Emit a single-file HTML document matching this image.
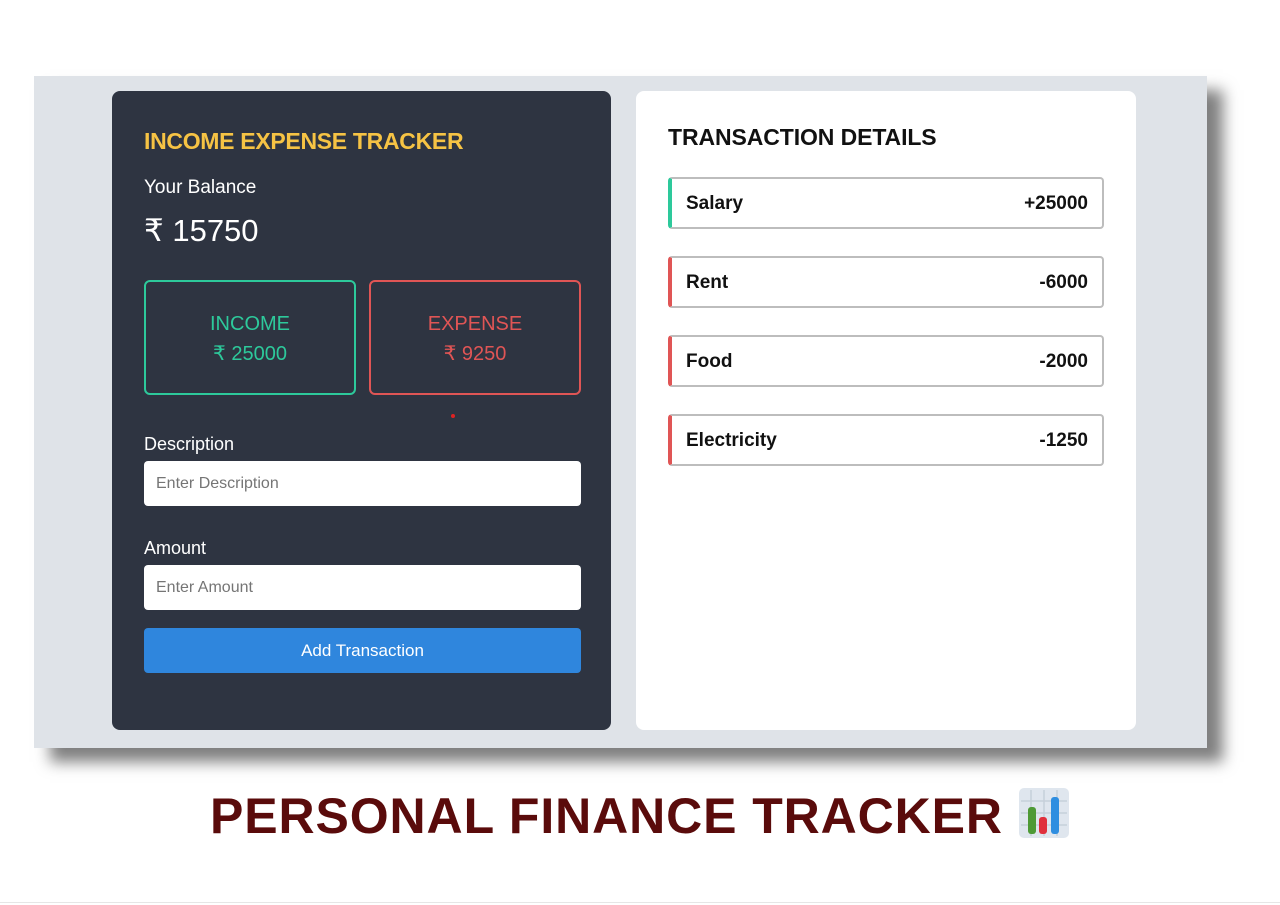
<!DOCTYPE html>
<html><head><meta charset="utf-8"><style>
*{box-sizing:border-box;margin:0;padding:0}
body{width:1280px;height:905px;background:#fff;font-family:"Liberation Sans",sans-serif;position:relative;overflow:hidden}
.panel{position:absolute;left:34px;top:76px;width:1173px;height:672px;background:#dfe3e8;box-shadow:16px 14px 14px rgba(0,0,0,0.5)}
.left{position:absolute;left:112px;top:91px;width:499px;height:639px;background:#2e3441;border-radius:8px;color:#fff}
.right{position:absolute;left:636px;top:91px;width:500px;height:639px;background:#fff;border-radius:8px}
.abs{position:absolute}
.box{position:absolute;top:280px;width:212px;height:115px;border:2px solid;border-radius:6px;text-align:center;font-size:20px;line-height:30px;padding-top:27px}
input{position:absolute;left:144px;width:437px;height:45px;border:none;border-radius:4px;background:#fff;padding-left:12px;font-size:16px;font-family:"Liberation Sans",sans-serif}
.item{position:absolute;left:668px;width:436px;height:52px;border:2px solid #bdbdbd;border-left:4px solid;border-radius:4px;background:#fff;font-size:19px;font-weight:bold;color:#111;display:flex;justify-content:space-between;align-items:center;padding:2px 14px 0 14px}
</style></head><body>
<div class="panel"></div>
<div class="left"></div>
<div class="right"></div>
<div class="abs" style="left:144px;top:128px;color:#f6c344;font-size:23px;font-weight:bold;letter-spacing:-0.3px">INCOME EXPENSE TRACKER</div>
<div class="abs" style="left:144px;top:177px;color:#fff;font-size:19px">Your Balance</div>
<div class="abs" style="left:144px;top:213px;color:#fff;font-size:31px">₹ 15750</div>
<div class="box" style="left:144px;border-color:#2dc99b;color:#2dc99b">INCOME<br>₹ 25000</div>
<div class="box" style="left:369px;border-color:#e05555;color:#e05555">EXPENSE<br>₹ 9250</div>
<div class="abs" style="left:451px;top:414px;width:4px;height:4px;border-radius:2px;background:#d22"></div>
<div class="abs" style="left:144px;top:434px;color:#fff;font-size:18px">Description</div>
<input style="top:461px" placeholder="Enter Description">
<div class="abs" style="left:144px;top:538px;color:#fff;font-size:18px">Amount</div>
<input style="top:565px" placeholder="Enter Amount">
<div class="abs" style="left:144px;top:628px;width:437px;height:45px;background:#2f86dd;border-radius:4px;color:#fff;font-size:17px;text-align:center;line-height:46px">Add Transaction</div>
<div class="abs" style="left:668px;top:124px;font-size:23px;color:#111;font-weight:bold;letter-spacing:-0.1px">TRANSACTION DETAILS</div>
<div class="item" style="top:177px;border-left-color:#2dc99b"><span>Salary</span><span>+25000</span></div>
<div class="item" style="top:256px;border-left-color:#e05555"><span>Rent</span><span>-6000</span></div>
<div class="item" style="top:335px;border-left-color:#e05555"><span>Food</span><span>-2000</span></div>
<div class="item" style="top:414px;border-left-color:#e05555"><span>Electricity</span><span>-1250</span></div>
<div class="abs" style="left:210px;top:787px;font-size:50px;font-weight:bold;color:#5a0b0b;white-space:nowrap;letter-spacing:0.9px">PERSONAL FINANCE TRACKER</div>
<svg class="abs" style="left:1019px;top:788px" width="50" height="50" viewBox="0 0 50 50">
<rect x="0" y="0" width="50" height="50" rx="5" fill="#dfe6ee"/>
<g stroke="#c6d0da" stroke-width="1.5"><line x1="12" y1="2" x2="12" y2="48"/><line x1="25" y1="2" x2="25" y2="48"/><line x1="38" y1="2" x2="38" y2="48"/><line x1="2" y1="13" x2="48" y2="13"/><line x1="2" y1="25" x2="48" y2="25"/><line x1="2" y1="37" x2="48" y2="37"/></g>
<rect x="9" y="19" width="8" height="27" rx="3" fill="#4e9a36"/>
<rect x="20" y="29" width="8" height="17" rx="3" fill="#e0303c"/>
<rect x="32" y="9" width="8" height="37" rx="3" fill="#2f8ee0"/>
</svg>
<div class="abs" style="left:0;top:902px;width:1280px;height:1px;background:#e6e6e6"></div>
</body></html>
